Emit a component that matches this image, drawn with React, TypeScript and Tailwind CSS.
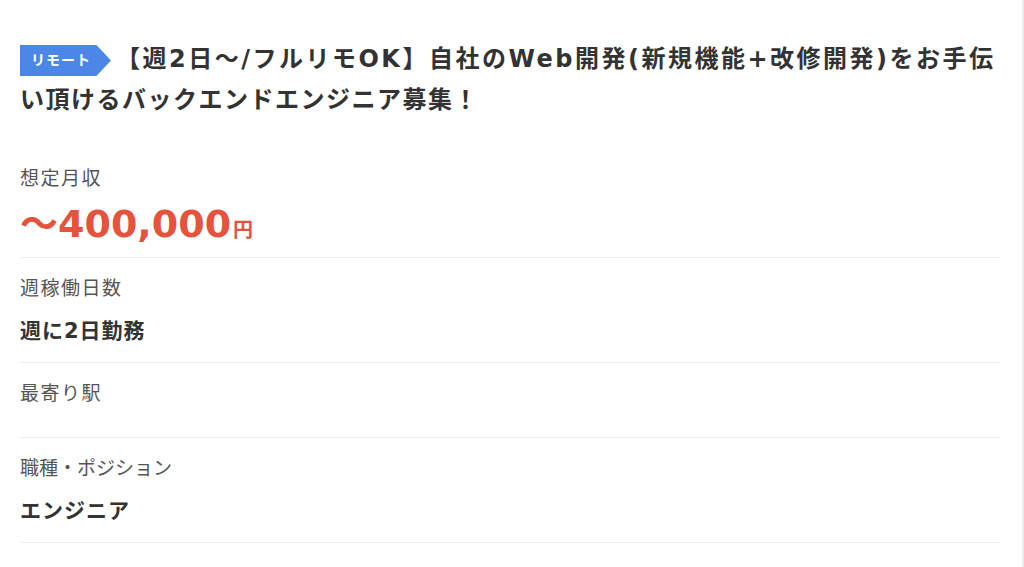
const font = "font-['DejaVu_Sans','Noto_Sans_CJK_JP',sans-serif]";

function Row({
  label,
  children,
  labelClass = "tracking-[1.5px]",
  valueClass = "",
}: {
  label: string;
  children?: React.ReactNode;
  labelClass?: string;
  valueClass?: string;
}) {
  return (
    <div className="border-b border-[#eeeeee] pt-4 pb-[15px]">
      <p className={`text-[19px] leading-[28px] text-[#555555] ${labelClass}`}>{label}</p>
      <div className={valueClass}>{children}</div>
    </div>
  );
}

export default function App() {
  return (
    <div className={`${font} flex h-[567px] w-[1024px] bg-white`}>
      <div className="w-[1000px] pl-5 pt-[39px]">
        {/* Title with badge */}
        <h1 className="text-[24px] font-bold leading-[41px] tracking-[1.5px] text-[#333333]">
          <span className="mr-[5px] inline-block h-[31px] w-[91px] bg-[#4c87e8] pl-[11px] align-[2px] text-[14px] font-bold leading-[31px] tracking-[1px] text-white [clip-path:polygon(0_0,84%_0,100%_50%,84%_100%,0_100%)]">
            リモート
          </span>
          <span className="tracking-[2.5px]">
            【週2日〜/フルリモOK】自社のWeb開発(新規機能+改修開発)をお手伝
          </span>
          <br />
          い頂けるバックエンドエンジニア募集！
        </h1>

        <div className="mt-[43px]">
          <div className="border-b border-[#eeeeee] pb-[8px]">
            <p className="text-[19px] leading-[28px] tracking-[1.5px] text-[#555555]">想定月収</p>
            <p className="mt-[13px] text-[38px] font-bold leading-[38px] text-[#e5533d]">
              〜400,000<span className="ml-[2px] text-[20px]">円</span>
            </p>
          </div>

          <Row label="週稼働日数" valueClass="mt-[13px] text-[21px] font-bold leading-[32px] tracking-[1px] text-[#333333]">
            週に2日勤務
          </Row>

          <Row label="最寄り駅" valueClass="mt-[15px]" />

          <Row
            label="職種・ポジション"
            labelClass="tracking-normal"
            valueClass="mt-[13px] text-[21px] font-bold leading-[32px] tracking-[1px] text-[#333333]"
          >
            エンジニア
          </Row>
        </div>
      </div>
      <div className="ml-auto w-[2px] bg-[#ececec]" />
    </div>
  );
}
